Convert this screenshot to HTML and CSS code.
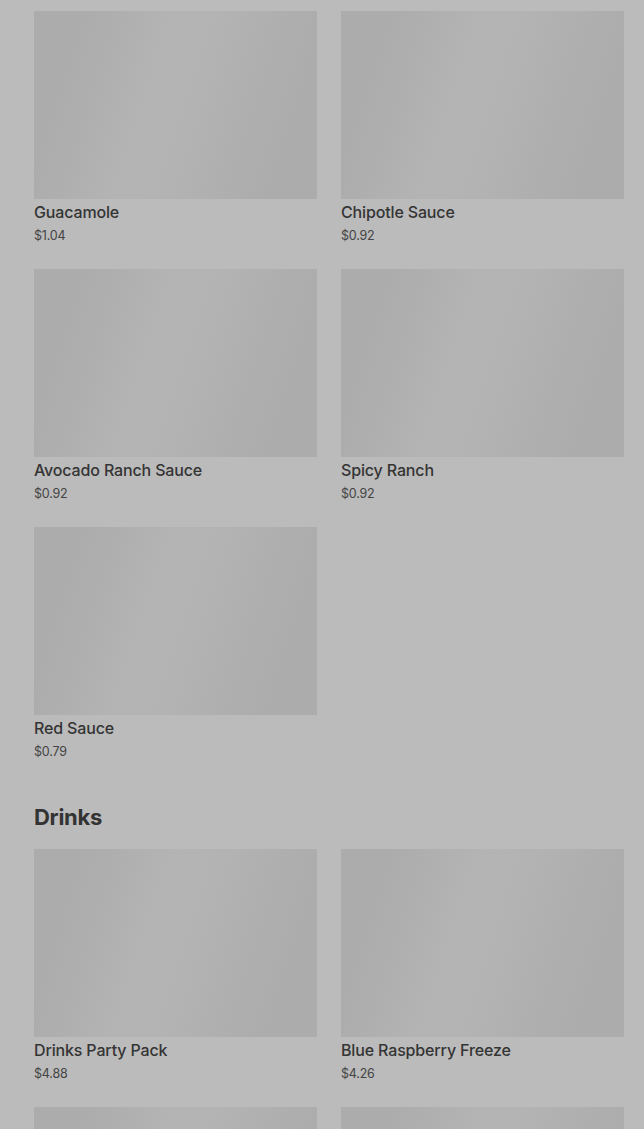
FILE: index.html
```html
<!DOCTYPE html>
<html lang="en">
<head>
  <meta charset="UTF-8">
  <title>Menu</title>
  <link rel="stylesheet" href="styles.css">
</head>
<body>

  <div class="menu">

    <section class="category">
      <div class="item-grid">
        <div class="item">
          <div class="item-img"></div>
          <div class="item-name">Guacamole</div>
          <div class="item-price">$1.04</div>
        </div>
        <div class="item">
          <div class="item-img"></div>
          <div class="item-name">Chipotle Sauce</div>
          <div class="item-price">$0.92</div>
        </div>
        <div class="item">
          <div class="item-img"></div>
          <div class="item-name">Avocado Ranch Sauce</div>
          <div class="item-price">$0.92</div>
        </div>
        <div class="item">
          <div class="item-img"></div>
          <div class="item-name">Spicy Ranch</div>
          <div class="item-price">$0.92</div>
        </div>
        <div class="item">
          <div class="item-img"></div>
          <div class="item-name">Red Sauce</div>
          <div class="item-price">$0.79</div>
        </div>
      </div>
    </section>

    <section class="category">
      <h2 class="category-title">Drinks</h2>
      <div class="item-grid">
        <div class="item">
          <div class="item-img"></div>
          <div class="item-name">Drinks Party Pack</div>
          <div class="item-price">$4.88</div>
        </div>
        <div class="item">
          <div class="item-img"></div>
          <div class="item-name">Blue Raspberry Freeze</div>
          <div class="item-price">$4.26</div>
        </div>
        <div class="item">
          <div class="item-img"></div>
          <div class="item-name"></div>
          <div class="item-price"></div>
        </div>
        <div class="item">
          <div class="item-img"></div>
          <div class="item-name"></div>
          <div class="item-price"></div>
        </div>
      </div>
    </section>

  </div>

</body>
</html>
```

FILE: styles.css
```css
body {
  margin: 0;
  background: #bbbbbb;
  font-family: Inter, "Noto Sans", sans-serif;
  color: #333;
  overflow: hidden;
}
.menu {
  padding: 11px 20px 0 34px;
}
.category {
  margin-bottom: 39px;
}
.category-title {
  margin: 0 0 16px;
  font-size: 22px;
  line-height: 32px;
  font-weight: 700;
  color: #333;
  letter-spacing: -0.3px;
}
.item-grid {
  display: grid;
  grid-template-columns: 1fr 1fr;
  column-gap: 24px;
  row-gap: 23px;
}
.item-img {
  height: 188px;
  background: linear-gradient(108deg, #acacac 15%, #b4b4b4 42%, #b3b3b3 55%, #acacac 85%);
}
.item-name {
  margin-top: 2px;
  font-size: 16px;
  line-height: 22px;
  font-weight: 500;
  color: #343434;
  letter-spacing: -0.15px;
}
.item-price {
  margin-top: 2px;
  font-size: 12.5px;
  line-height: 21px;
  color: #444;
  letter-spacing: -0.2px;
}
```
